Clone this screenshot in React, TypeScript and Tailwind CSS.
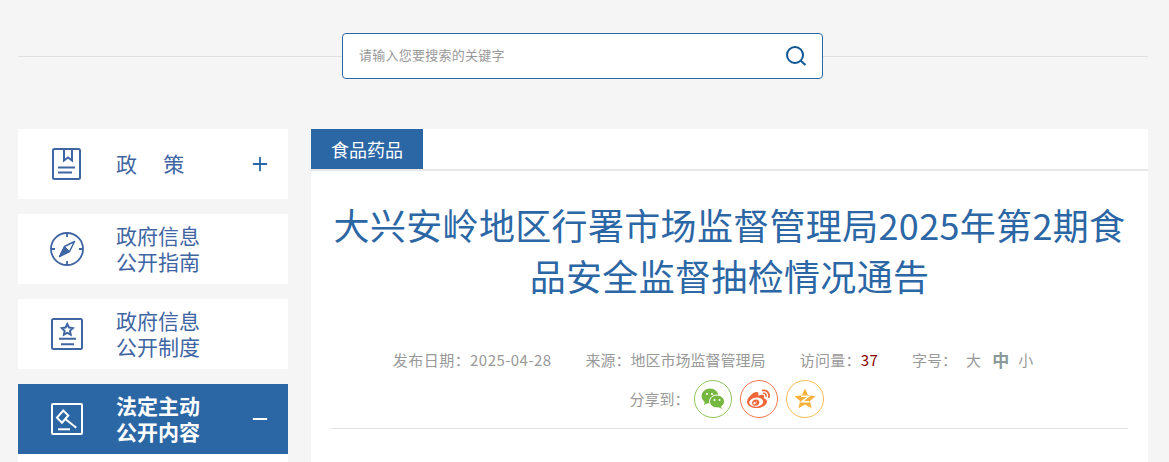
import { Minus, Plus } from "lucide-react";
import { FaWeibo } from "react-icons/fa";

const font = "font-['Noto_Sans_CJK_SC','Liberation_Sans',sans-serif]";

function BookIcon() {
  return (
    <svg width="32" height="34" viewBox="0 0 32 34" fill="none" stroke="#3f66a3" strokeWidth="2">
      <rect x="2" y="2" width="27" height="30" rx="1.5" />
      <path d="M13 2v11.500l4-3 4 3V2" />
      <path d="M7 20.500h17M7 25.500h14" />
    </svg>
  );
}

function CompassIcon() {
  return (
    <svg width="36" height="36" viewBox="0 0 36 36" fill="none" stroke="#3f66a3" strokeWidth="1.800">
      <circle cx="18" cy="18" r="16" />
      <path d="M18 2v4M18 30v4M2 18h4M30 18h4" />
      <path d="M25.500 10.500L15.500 15.500 10.500 25.500 20.500 20.500z" strokeWidth="1.500" strokeLinejoin="round" />
      <path d="M15.500 15.500L10.500 25.500 20.500 20.500z" fill="#3f66a3" strokeWidth="1" strokeLinejoin="round" />
    </svg>
  );
}

function StarFileIcon() {
  return (
    <svg width="34" height="34" viewBox="0 0 34 34" fill="none" stroke="#3f66a3" strokeWidth="2">
      <rect x="2" y="2" width="30" height="30" rx="1.500" />
      <path d="M17.300 7l1.700 3.500 3.800.6-2.800 2.700.7 3.900-3.400-1.800-3.400 1.800.7-3.900-2.800-2.700 3.800-.6z" />
      <path d="M9 21.700h17M11 27.300h13" />
    </svg>
  );
}

function GavelIcon() {
  return (
    <svg width="34" height="34" viewBox="0 0 34 34" fill="none" stroke="#fff" strokeWidth="2">
      <rect x="2" y="2" width="30" height="30" rx="1" />
      <path d="M7 15.700L13.300 8.500l5 5-6.300 7.200z" />
      <path d="M15.300 17l11 8.700" />
      <path d="M8 27.300h12" />
    </svg>
  );
}

function WechatIcon() {
  return (
    <svg width="24" height="22" viewBox="0 0 24 22">
      <ellipse cx="9" cy="8" rx="8.500" ry="7.500" fill="#76b83f" />
      <path d="M4 13l-1 4 5-2.500z" fill="#76b83f" />
      <ellipse cx="16" cy="13.500" rx="7.500" ry="6.500" fill="#76b83f" stroke="#fff" strokeWidth="1" />
      <path d="M19.500 18l2 3-4.500-2z" fill="#76b83f" />
      <circle cx="6" cy="6" r="1.100" fill="#fff" />
      <circle cx="11" cy="6" r="1.100" fill="#fff" />
      <circle cx="13.500" cy="12" r="1" fill="#fff" />
      <circle cx="18.500" cy="12" r="1" fill="#fff" />
    </svg>
  );
}

function QzoneIcon() {
  return (
    <svg width="22" height="22" viewBox="0 0 20 20">
      <path d="M10 .5l2.800 6.200 6.700.7-5 4.500 1.500 6.600L10 15.100l-6 3.400 1.500-6.600-5-4.500 6.700-.7z" fill="#fbb03b" />
      <path d="M6.500 7.500h7L7 12.500h7" fill="none" stroke="#fff" strokeWidth="1.400" />
    </svg>
  );
}

const menu = [
  { icon: <BookIcon />, label: "政\u3000\u2005策", toggle: "plus" },
  { icon: <CompassIcon />, label: "政府信息\n公开指南" },
  { icon: <StarFileIcon />, label: "政府信息\n公开制度" },
  { icon: <GavelIcon />, label: "法定主动\n公开内容", toggle: "minus", active: true },
];

export default function App() {
  return (
    <div className={`h-[462px] overflow-hidden bg-[#f5f5f5] ${font}`}>
      <div className="ml-[18px] w-[1130px] pt-[33px]">
        <div className="flex items-center">
          <div className="h-px w-[324px] bg-[#e0e0e0]" />
          <div className="flex h-[46px] w-[481px] items-center justify-between rounded-[4px] border border-[#2c66a5] bg-white pl-4 pr-[15px]">
            <span className="mb-[3px] text-[13px] tracking-[0.25px] text-[#999]">请输入您要搜索的关键字</span>
            <svg width="22" height="22" viewBox="0 0 22 22" fill="none" stroke="#0f5596" strokeWidth="2">
              <circle cx="10" cy="10" r="8" />
              <path d="M16 16l4.500 4" />
            </svg>
          </div>
          <div className="h-px flex-1 bg-[#e0e0e0]" />
        </div>

        <div className="mt-[50px] flex gap-[23px]">
          <aside className="flex w-[270px] shrink-0 flex-col gap-[15px]">
            {menu.map((item) => (
              <div
                key={item.label}
                className={`flex h-[70px] items-center ${item.active ? "bg-[#2b66a5] font-bold text-white" : "bg-white text-[#3f66a3]"}`}
              >
                <div className="flex w-[98px] justify-center">{item.icon}</div>
                <div className="flex-1 whitespace-pre-line pb-[3px] text-[21px] leading-[26px]">{item.label}</div>
                {item.toggle === "plus" && <Plus className="mr-[17px] text-[#2b66a5]" size={22} strokeWidth={2} />}
                {item.toggle === "minus" && <Minus className="mr-[17px] text-white" size={22} strokeWidth={2} />}
              </div>
            ))}
            <div className="-mt-[15px] h-20 bg-white" />
          </aside>

          <main className="min-w-0 flex-1 bg-white">
            <div className="h-[42px] border-b-2 border-[#e8e8e8]">
              <div className="flex h-10 w-[112px] items-center justify-center bg-[#2b66a5] text-[18px] text-white">食品药品</div>
            </div>
            <div className="px-5">
              <h1 className="mt-[28px] text-center text-[36px] font-normal leading-[51px] tracking-[0.33px] text-[#2b66a5]">
                大兴安岭地区行署市场监督管理局2025年第2期食品安全监督抽检情况通告
              </h1>
              <div className="mt-[49px] flex items-center justify-center gap-[34px] pr-[33px] text-[15px] leading-5 text-[#999]">
                <span className="tracking-[0.45px]">发布日期：2025-04-28</span>
                <span>来源：地区市场监督管理局</span>
                <span className="tracking-[0.3px]">
                  访问量：<span className="text-[#8b0000]">37</span>
                </span>
                <span className="flex items-center">
                  字号：
                  <span className="ml-[9px]">大</span>
                  <span className="ml-[11px] text-[17px] font-bold text-[#8a9a9a]">中</span>
                  <span className="ml-[9px]">小</span>
                </span>
              </div>
              <div className="mt-[10px] flex items-center justify-center gap-2 pr-[6px] text-[15px] text-[#999]">
                <span className="mr-[-4px]">分享到：</span>
                <span className="flex size-[38px] items-center justify-center rounded-full border border-[#8cc65a]"><WechatIcon /></span>
                <span className="flex size-[38px] items-center justify-center rounded-full border border-[#f5764a]"><FaWeibo className="text-[#f0663a]" size={23} /></span>
                <span className="flex size-[38px] items-center justify-center rounded-full border border-[#fbbd55]"><QzoneIcon /></span>
              </div>
              <div className="mt-[10px] h-px bg-[#e3e3e3]" />
            </div>
          </main>
        </div>
      </div>
    </div>
  );
}
